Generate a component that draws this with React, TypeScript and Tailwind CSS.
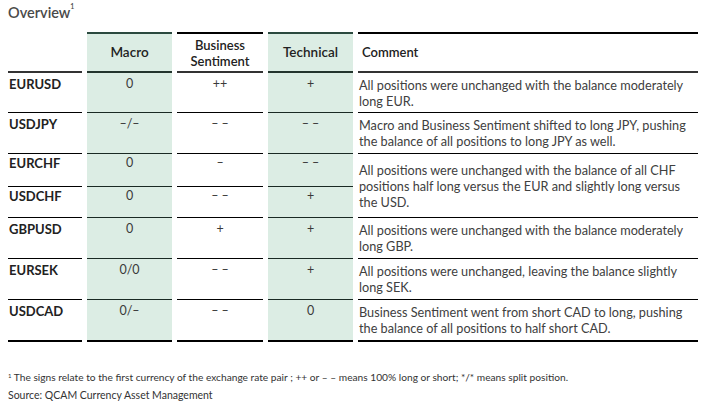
import React from 'react';

type Row = {
  pair: string;
  macro: string;
  business: string;
  technical: string;
  comment?: string;
  span?: boolean;
};

const rows: Row[] = [
  { pair: 'EURUSD', macro: '0', business: '++', technical: '+', comment: 'All positions were unchanged with the balance moderately long EUR.' },
  { pair: 'USDJPY', macro: '–/–', business: '– –', technical: '– –', comment: 'Macro and Business Sentiment shifted to long JPY, pushing the balance of all positions to long JPY as well.' },
  { pair: 'EURCHF', macro: '0', business: '–', technical: '– –', comment: 'All positions were unchanged with the balance of all CHF positions half long versus the EUR and slightly long versus the USD.', span: true },
  { pair: 'USDCHF', macro: '0', business: '– –', technical: '+' },
  { pair: 'GBPUSD', macro: '0', business: '+', technical: '+', comment: 'All positions were unchanged with the balance moderately long GBP.' },
  { pair: 'EURSEK', macro: '0/0', business: '– –', technical: '+', comment: 'All positions were unchanged, leaving the balance slightly long SEK.' },
  { pair: 'USDCAD', macro: '0/–', business: '– –', technical: '0', comment: 'Business Sentiment went from short CAD to long, pushing the balance of all positions to half short CAD.' },
];

const green = 'bg-[#dcede4]';

export default function App() {
  return (
    <div className="w-[713px] h-[413px] bg-white text-[#3a3a3a] font-['Lato','Liberation_Sans',sans-serif] px-[8px] pt-[4px]">
      <div className="text-[14.5px] font-semibold text-[#4a4a4a] leading-[18px]">
        Overview<sup className="text-[7px] align-super">1</sup>
      </div>

      <div className="mt-[10px] grid grid-cols-[74px_85px_86px_85px_340px] gap-x-[5px] grid-rows-[41px_40px_41px_33px_31px_41px_41px_42px]">
        {/* Header */}
        <div className="border-b-2 border-[#333] mt-[2px]" />
        <div className={`${green} border-t-2 border-b-2 border-t-[#2b4a3f] border-b-[#23352d] flex items-center justify-center text-[13.5px] font-semibold text-[#222]`}>
          Macro
        </div>
        <div className="border-t-2 border-b-2 border-t-black border-b-[#333] flex items-center justify-center text-center text-[13px] font-semibold text-[#222] leading-[16px]">
          Business<br />Sentiment
        </div>
        <div className={`${green} border-t-2 border-b-2 border-t-[#2b4a3f] border-b-[#23352d] flex items-center justify-center text-[13.5px] font-semibold text-[#222]`}>
          Technical
        </div>
        <div className="border-t-2 border-b-2 border-t-black border-b-[#333] flex items-center pl-[4px] text-[13px] font-semibold text-[#222]">
          Comment
        </div>

        {/* Body */}
        {rows.map((r, i) => {
          const last = i === rows.length - 1;
          const line = last ? 'border-b-2 border-black' : 'border-b border-black';
          const greenLine = last ? 'border-b-2 border-black' : 'border-b border-[#1a2a24]';
          const pt = r.pair === 'EURCHF' || r.pair === 'USDCHF' ? 'pt-[1px]' : 'pt-[3px]';
          return (
            <React.Fragment key={r.pair}>
              <div className={`${line} ${pt} pl-[1px] text-[13px] font-bold text-[#222] leading-[16px]`}>{r.pair}</div>
              <div className={`${green} ${greenLine} ${pt} text-center text-[12.5px] leading-[16px]`}>{r.macro}</div>
              <div className={`${line} ${pt} text-center text-[12.5px] leading-[16px]`}>{r.business}</div>
              <div className={`${green} ${greenLine} ${pt} text-center text-[12.5px] leading-[16px]`}>{r.technical}</div>
              {r.comment !== undefined && (
                <div className={`${line} ${r.span ? 'row-span-2' : ''} flex items-center pl-[1px] pr-[2px] text-[12.7px] leading-[16px] text-[#404040]`}>
                  {r.comment}
                </div>
              )}
            </React.Fragment>
          );
        })}
      </div>

      <div className="mt-[29px] text-[10.2px] leading-[13px] text-[#333]">
        <sup className="text-[6px]">1</sup> The signs relate to the first currency of the exchange rate pair ; ++ or – – means 100% long or short; */* means split position.
      </div>
      <div className="mt-[5px] text-[10.5px] leading-[13px] text-[#333]">Source: QCAM Currency Asset Management</div>
    </div>
  );
}
